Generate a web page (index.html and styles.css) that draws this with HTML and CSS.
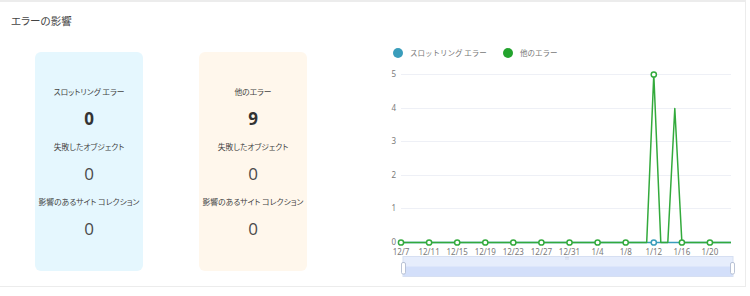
FILE: index.html
```html
<!DOCTYPE html>
<html lang="ja">
<head>
    <meta charset="UTF-8">
    <title>エラーの影響</title>
    <link rel="stylesheet" href="styles.css">
</head>
<body>
<div class="panel">
    <div class="panel-title">エラーの影響</div>
    <div class="panel-body">
        <div class="stats">
            <div class="stat-card throttle">
                <div class="stat-label">スロットリング エラー</div>
                <div class="stat-value strong">0</div>
                <div class="stat-label">失敗したオブジェクト</div>
                <div class="stat-value">0</div>
                <div class="stat-label">影響のあるサイト コレクション</div>
                <div class="stat-value">0</div>
            </div>
            <div class="stat-card other">
                <div class="stat-label">他のエラー</div>
                <div class="stat-value strong">9</div>
                <div class="stat-label">失敗したオブジェクト</div>
                <div class="stat-value">0</div>
                <div class="stat-label">影響のあるサイト コレクション</div>
                <div class="stat-value">0</div>
            </div>
        </div>

        <svg class="chart" width="360" height="245" viewBox="0 0 360 245">
            <!-- legend -->
            <circle cx="13" cy="13" r="5" fill="#3a9dbb"/>
            <text class="legend" x="25" y="16">スロットリング エラー</text>
            <circle cx="123" cy="13" r="5" fill="#23a32d"/>
            <text class="legend" x="135" y="16">他のエラー</text>

            <!-- grid -->
            <g stroke="#eef0f6" stroke-width="1">
                <line x1="16" y1="34.5" x2="346" y2="34.5"/>
                <line x1="16" y1="68.5" x2="346" y2="68.5"/>
                <line x1="16" y1="101.5" x2="346" y2="101.5"/>
                <line x1="16" y1="135.5" x2="346" y2="135.5"/>
                <line x1="16" y1="168.5" x2="346" y2="168.5"/>
            </g>
            <g class="axis" text-anchor="end">
                <text x="11" y="37">5</text>
                <text x="11" y="71">4</text>
                <text x="11" y="104">3</text>
                <text x="11" y="138">2</text>
                <text x="11" y="171">1</text>
                <text x="11" y="204.5">0</text>
            </g>
            <g class="axis" text-anchor="middle">
                <text x="16" y="214.5">12/7</text>
                <text x="44.1" y="214.5">12/11</text>
                <text x="72.2" y="214.5">12/15</text>
                <text x="100.3" y="214.5">12/19</text>
                <text x="128.3" y="214.5">12/23</text>
                <text x="156.4" y="214.5">12/27</text>
                <text x="184.5" y="214.5">12/31</text>
                <text x="212.6" y="214.5">1/4</text>
                <text x="240.7" y="214.5">1/8</text>
                <text x="268.8" y="214.5">1/12</text>
                <text x="296.9" y="214.5">1/16</text>
                <text x="324.9" y="214.5">1/20</text>
            </g>

            <!-- throttling series -->
            <polyline points="16,202.5 346,202.5" fill="none" stroke="#3a9dbb" stroke-width="1.5"/>
            <g fill="#fff" stroke="#3a9dbb" stroke-width="1.5">
                <circle cx="268.8" cy="202.5" r="2.6"/>
            </g>

            <!-- other errors series -->
            <polyline points="16,202.5 261.7,202.5 268.8,34.5 275.8,202.5 282.8,202.5 289.8,68.5 296.9,202.5 346,202.5"
                      fill="none" stroke="#33aa3c" stroke-width="1.5" stroke-linejoin="round"/>
            <g fill="#fff" stroke="#33aa3c" stroke-width="1.5">
                <circle cx="16" cy="202.5" r="2.6"/>
                <circle cx="44.1" cy="202.5" r="2.6"/>
                <circle cx="72.2" cy="202.5" r="2.6"/>
                <circle cx="100.3" cy="202.5" r="2.6"/>
                <circle cx="128.3" cy="202.5" r="2.6"/>
                <circle cx="156.4" cy="202.5" r="2.6"/>
                <circle cx="184.5" cy="202.5" r="2.6"/>
                <circle cx="212.6" cy="202.5" r="2.6"/>
                <circle cx="240.7" cy="202.5" r="2.6"/>
                <circle cx="268.8" cy="34.5" r="2.6"/>
                <circle cx="296.9" cy="202.5" r="2.6"/>
                <circle cx="324.9" cy="202.5" r="2.6"/>
            </g>

            <!-- data zoom -->
            <rect x="18" y="216.5" width="330" height="20" fill="#e6edfc" stroke="#d6dff2"/>
            <rect x="18.5" y="226.5" width="329" height="9.5" fill="#d3dffa"/>
            <g stroke="#d0d6e2" stroke-width="0.8">
                <line x1="180" y1="217.5" x2="184" y2="217.5"/>
                <line x1="180" y1="219" x2="184" y2="219"/>
            </g>
            <rect x="16.5" y="222.5" width="4" height="11.5" rx="1.5" fill="#fff" stroke="#aab5cc" stroke-width="0.8"/>
            <rect x="345.5" y="222.5" width="4" height="11.5" rx="1.5" fill="#fff" stroke="#aab5cc" stroke-width="0.8"/>
        </svg>
    </div>
</div>
</body>
</html>
```

FILE: styles.css
```css
body {
    margin: 0;
    padding: 0;
    background: #fff;
    font-family: "Noto Sans CJK JP", "Noto Sans", sans-serif;
    color: #333;
}

.panel {
    width: 745px;
    height: 284px;
    border: 1px solid #ececec;
    border-left: none;
    border-top-width: 2px;
    box-sizing: content-box;
}

.panel-title {
    height: 38px;
    line-height: 38px;
    padding-left: 11px;
    font-size: 10.5px;
    color: #444;
    font-feature-settings: "palt";
}

.panel-body {
    display: flex;
}

.stats {
    display: flex;
    gap: 56px;
    padding-left: 35px;
    padding-top: 12px;
}

.stat-card {
    width: 108px;
    height: 219px;
    border-radius: 6px;
    box-sizing: border-box;
    padding-top: 26px;
    display: flex;
    flex-direction: column;
    align-items: center;
}

.throttle {
    background: #e5f7fe;
}

.other {
    background: #fff7ec;
}

.stat-label {
    height: 27px;
    line-height: 27px;
    font-size: 7.8px;
    color: #444;
    font-feature-settings: "palt";
    white-space: nowrap;
}

.stat-value {
    height: 28px;
    line-height: 28px;
    font-family: "Open Sans", "Noto Sans", sans-serif;
    font-size: 17px;
    font-weight: 400;
    color: #4a4a4a;
}

.stat-value.strong {
    font-weight: 700;
    color: #333;
}

.chart {
    display: block;
    margin-left: 78px;
}

.legend {
    font-size: 7.5px;
    fill: #777;
}

.axis text {
    font-family: "Noto Sans", sans-serif;
    font-size: 8px;
    fill: #7a7a7a;
}
```
